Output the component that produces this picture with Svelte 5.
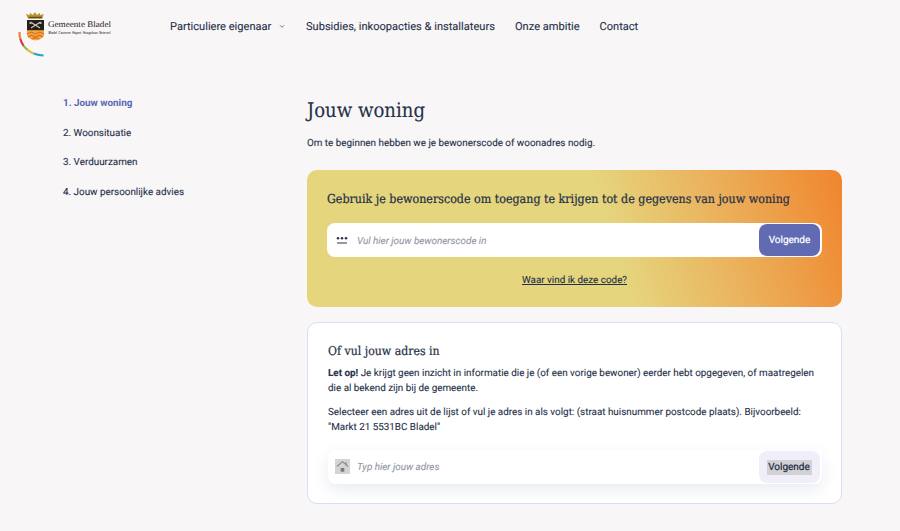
<script>
  const steps = ['Jouw woning', 'Woonsituatie', 'Verduurzamen', 'Jouw persoonlijke advies'];
  let code = $state('');
  let address = $state('');
</script>

<div class="page">
  <header>
    <svg class="logo" width="96" height="46" viewBox="0 0 96 46" role="img" aria-label="Gemeente Bladel">
      <path d="M9.4 5.5 8 1.8l3.2 1.5L12.4.8l2 2.1L17 .3l2.2 2.6 2.3-2.1 1 2.5 3.2-1.5-1.5 4.9H10.5z" fill="#b7952f" />
      <path d="M11 5.4h13" stroke="#5f4b20" stroke-width="1.3" />
      <path d="M9 8h17v14c0 3.2-3 5.2-8.5 6.5C12 27.2 9 25.2 9 22z" fill="#f4ab35" />
      <path d="M9 8h17v10.2H9z" fill="#20201e" />
      <path d="m12.5 10 9.5 6M22.5 10 13 16" stroke="#d9cdb2" stroke-width="1.1" />
      <path d="M11.5 10h2v2h-2zm10 0h2v2h-2z" fill="#c8b98e" />
      <path d="m9 22 4.2-2 4.3 2 4.2-2 4.3 2M10 25l3.5-1.8 4 2 4-2L25 25M13.5 27l4-1.2 4 1.2" fill="none" stroke="#da672d" stroke-width="1.1" />
      <g fill="none" stroke-width="2.2">
        <path d="M1.6 20q-.4 3.5.8 7" stroke="#ed813f" />
        <path d="M2.4 27q1 3.8 3.2 6.8" stroke="#d9364a" />
        <path d="M5.6 33.8q1.7 2.2 4 4" stroke="#8dbb43" />
        <path d="M9.6 37.8q2.6 2.1 6 3.7" stroke="#dfbd35" />
        <path d="M15.6 41.5q4.5 1.7 10 2" stroke="#2aa6d4" />
      </g>
      <text class="logo-name" x="30" y="15.2" textLength="63" lengthAdjust="spacingAndGlyphs">Gemeente Bladel</text>
      <text class="logo-towns" x="30.5" y="21.6" textLength="62" lengthAdjust="spacingAndGlyphs" xml:space="preserve">Bladel  Casteren  Hapert  Hoogeloon  Netersel</text>
    </svg>
    <nav>
      <a href="#eigenaar">Particuliere eigenaar
        <svg width="6" height="5" viewBox="0 0 6 5"><path d="m1 1.3 2 2 2-2" fill="none" stroke="#4a5165" stroke-width=".8" /></svg>
      </a>
      <a class="subsidies" href="#subsidies">Subsidies, inkoopacties &amp; installateurs</a>
      <a class="ambition" href="#ambitie">Onze ambitie</a>
      <a class="contact" href="#contact">Contact</a>
    </nav>
  </header>

  <div class="content">
    <aside>
      {#each steps as step, i}
        <div class:active={i === 0}>{i + 1}. {step}</div>
      {/each}
    </aside>
    <main>
      <h1>Jouw woning</h1>
      <p class="intro">Om te beginnen hebben we je bewonerscode of woonadres nodig.</p>

      <section class="code-card">
        <h2>Gebruik je bewonerscode om toegang te krijgen tot de gegevens van jouw woning</h2>
        <div class="field">
          <svg width="12" height="10" viewBox="0 0 12 10"><path d="M1 8h10" stroke="#29334b" stroke-width="1" /><g fill="#29334b"><circle cx="2" cy="3.2" r="1.25" /><circle cx="6" cy="3.2" r="1.25" /><circle cx="10" cy="3.2" r="1.25" /></g></svg>
          <input bind:value={code} placeholder="Vul hier jouw bewonerscode in" aria-label="Bewonerscode" />
          <button>Volgende</button>
        </div>
        <a class="help" href="#code">Waar vind ik deze code?</a>
      </section>

      <section class="address-card">
        <h2>Of vul jouw adres in</h2>
        <p><b>Let op!</b> Je krijgt geen inzicht in informatie die je (of een vorige bewoner) eerder hebt opgegeven, of maatregelen<br />die al bekend zijn bij de gemeente.</p>
        <p class="hint">Selecteer een adres uit de lijst of vul je adres in als volgt: (straat huisnummer postcode plaats). Bijvoorbeeld:<br />"Markt 21 5531BC Bladel"</p>
        <div class="field">
          <svg class="house" width="15" height="15" viewBox="0 0 15 15"><path fill="#d4d4d4" d="M0 0h15v15H0z" /><path d="m2 7.5 5.5-4.8L13 7.5M11 3v2.5" fill="none" stroke="#85898f" stroke-width="1.1" /><path fill="#777b82" d="M5.7 9h3.6v3.7H5.7z" /></svg>
          <input bind:value={address} placeholder="Typ hier jouw adres" aria-label="Adres" />
          <button><span>Volgende</span></button>
        </div>
      </section>
    </main>
  </div>
</div>

<style>
  :global(body) { margin: 0; background: #f8f6f7; }
  .page { height: 531px; overflow: hidden; background: #f8f6f7; color: #263149; font: 9.87px/14.7px Roboto, sans-serif; text-rendering: geometricPrecision; -webkit-text-stroke: .1px currentColor; }
  a { color: inherit; text-decoration: none; }
  header { display: flex; height: 75px; padding-left: 18px; box-sizing: border-box; }
  .logo { margin-top: 12px; flex: none; }
  .logo-name { font: 8.8px "Liberation Serif", serif; fill: #282629; -webkit-text-stroke: .15px #282629; }
  .logo-towns { font: bold 3px "Liberation Sans", sans-serif; fill: #555154; -webkit-text-stroke: 0; text-rendering: auto; }
  nav { display: flex; margin: 19px 0 0 56px; font-size: 11.09px; line-height: 16px; white-space: nowrap; }
  nav a:first-child { width: 136px; }
  nav svg { margin: 0 0 1px 5px; }
  .subsidies { width: 209px; }
  .ambition { width: 84.5px; }
  .content { display: flex; }
  aside { width: 244px; padding: 22.3px 0 0 63px; flex: none; }
  aside div { height: 29.6px; }
  .active { color: #5a68b5; font-weight: 700; -webkit-text-stroke: 0; }
  main { width: 535px; }
  h1, h2 { font-family: "DejaVu Serif Condensed", "DejaVu Serif", serif; font-stretch: condensed; font-weight: 400; white-space: nowrap; margin: 0; }
  h1 { font-size: 20.1px; line-height: 28px; padding-top: 21px; }
  p { margin: 0; white-space: nowrap; }
  .intro { padding-top: 12.5px; }
  section { box-sizing: border-box; border-radius: 10px; padding: 0 20px; }
  .code-card { margin-top: 18.8px; height: 137px; background: linear-gradient(72deg, #e5d67e 0%, #e5d67e 56%, #ebb25d 76%, #f0852d 100%); }
  h2 { font-size: 12.35px; line-height: 18px; -webkit-text-stroke: .22px currentColor; }
  .code-card h2 { padding-top: 20px; }
  .field { display: flex; align-items: center; box-sizing: border-box; width: 495px; height: 34px; padding: 0 2px 0 9px; background: #fff; border-radius: 8px; }
  .code-card .field { margin-top: 15px; }
  input { flex: 1; min-width: 0; padding: 2px 0 0 9px; border: 0; outline: 0; background: transparent; font: italic 9.87px Roboto, sans-serif; color: #263149; text-rendering: inherit; }
  input::placeholder { color: #9297a5; opacity: 1; }
  button { width: 61px; height: 32px; padding: 1px 0 0; border: 0; border-radius: 8px; background: #606bb4; color: #fff; font: 400 10px Roboto, sans-serif; text-rendering: inherit; -webkit-text-stroke: .2px currentColor; }
  .help { display: block; width: max-content; margin: 16.5px auto 0; text-decoration: underline; text-underline-offset: 1.2px; }
  .address-card { height: 182px; margin-top: 15px; border: 1px solid #dcdcf4; background: #fff; }
  .address-card h2 { padding: 19px 0 7px; font-size: 12.2px; }
  .hint { margin-top: 10px; }
  .address-card .field { width: 494px; margin: 14px 0 0; padding-left: 7px; box-shadow: 0 6px 15px #7186a827; }
  .address-card input { padding-left: 7px; }
  .address-card button { background: #efeef9; color: #202b42; }
  .address-card span { display: inline-block; background: #d2d2d4; line-height: 15px; padding: 0 2px 0 1px; }
</style>
